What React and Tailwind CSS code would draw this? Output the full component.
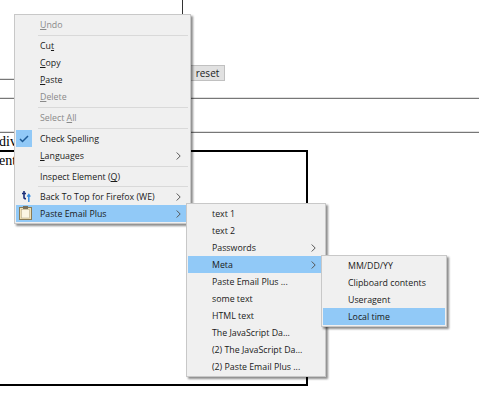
import React from "react";

const Chevron = () => (
  <svg width="5" height="8" viewBox="0 0 5 8" className="absolute right-[5px] top-[5px]" fill="none" stroke="#555" strokeWidth="1">
    <path d="M.7.5 4.2 4 .7 7.5" />
  </svg>
);

const Row = ({ children, dis, hi, arrow, pad = 24 }) => (
  <div className={`relative h-[17px] leading-[19px] whitespace-nowrap ${hi ? "bg-[#91c9f7]" : ""} ${dis ? "text-[#8a8a8a]" : "text-[#1a1a1a]"}`} style={{ paddingLeft: pad }}>
    {children}
    {arrow && <Chevron />}
  </div>
);

const Sep = ({ short }) => <div className={`-mr-[2px] flex items-center pl-[22px] ${short ? "h-[3px]" : "h-[4px]"}`}><div className="h-px w-full bg-[#d9d9d9]" /></div>;

const U = ({ children }) => <span className="underline underline-offset-1">{children}</span>;

const menu = "absolute bg-[#f0f0f0] border border-[#c8c8c8] pl-[1px] py-[1px] shadow-[2px_2px_2px_rgba(0,0,0,0.45)] text-[8.8px] [font-family:'Open_Sans','Noto_Sans',sans-serif]";

const Rule = ({ className }) => <div className={`h-[2px] border-t border-[#e0e0e0] bg-[#777] bg-clip-padding ${className}`} />;

export default function App() {
  return (
    <div className="relative h-[400px] w-[479px] overflow-hidden bg-white [font-family:'Liberation_Serif',serif] text-[14px] text-black">
      <div className="flex h-[78px] justify-end pr-[296px]">
        <div className="h-[14px] w-px bg-[#333]" />
      </div>
      <div className="h-[2px] w-[14px] border-t border-[#e0e0e0] bg-[#777] bg-clip-padding" />
      <button className="absolute left-[190px] top-[65px] h-[16px] w-[35px] border border-[#c0c0c0] bg-[#e1e1e1] text-[10px] leading-[14px] text-[#222] [font-family:'Open_Sans',sans-serif]">reset</button>
      <Rule className="mt-[17px]" />
      <Rule className="mt-[32px]" />
      <div className="-ml-[1px] mt-[1px] h-[16px] leading-[16px]">div</div>
      <div className="-ml-[6px] h-[236px] w-[314px] overflow-hidden border-[2.5px] border-black pl-[3px] pt-[2px] leading-[14px]">
        ent
      </div>

      <div className={`${menu} left-[14px] top-[14px] w-[177px] pr-[4px]`}>
        <Row dis><U>U</U>ndo</Row>
        <Sep />
        <Row>Cu<U>t</U></Row>
        <Row><U>C</U>opy</Row>
        <Row><U>P</U>aste</Row>
        <Row dis><U>D</U>elete</Row>
        <Sep />
        <Row dis>Select <U>A</U>ll</Row>
        <Sep />
        <div className="relative">
          <div className="absolute left-0 top-0 flex h-[17px] w-[16px] items-center justify-center bg-[#91c9f7]">
            <svg width="10" height="8" viewBox="0 0 10 8" fill="none" stroke="#1d5a96" strokeWidth="1.5"><path d="M1 4 3.5 6.5 9 1" /></svg>
          </div>
          <Row>Check Spelling</Row>
        </div>
        <Row arrow><U>L</U>anguages</Row>
        <Sep />
        <Row>Inspect Element (<U>Q</U>)</Row>
        <Sep short />
        <div className="relative">
          <svg className="absolute left-[6px] top-[3px]" width="9" height="11" viewBox="0 0 9 11" fill="none">
            <path d="M2 0v6.5c0 1 .6 1.2 2 1.2M0 2.5h4" stroke="#1c2f7a" strokeWidth="1.6" />
            <path d="M6.8 11V4M5.3 5.6 6.8 3.6l1.5 2" stroke="#3b8ee0" strokeWidth="1.5" />
          </svg>
          <Row arrow>Back To Top for Firefox (WE)</Row>
        </div>
        <div className="relative">
          <Row hi arrow>Paste Email Plus</Row>
          <svg className="absolute left-[3px] top-[1px]" width="13" height="14" viewBox="0 0 13 14">
            <rect x="0.5" y="1.5" width="12" height="12" fill="#efe0b6" stroke="#8a7b55" />
            <rect x="2.5" y="3.5" width="8" height="8.5" fill="#fbf6e4" stroke="#b9ad8c" strokeWidth="0.6" />
            <rect x="4" y="0" width="5" height="3" fill="#77705c" />
          </svg>
        </div>
      </div>

      <div className={`${menu} left-[186px] top-[203px] w-[140px] pr-[4px]`}>
        <Row>text 1</Row>
        <Row>text 2</Row>
        <Row arrow>Passwords</Row>
        <Row hi arrow>Meta</Row>
        <Row>Paste Email Plus ...</Row>
        <Row>some text</Row>
        <Row>HTML text</Row>
        <Row>The JavaScript Da...</Row>
        <Row>(2) The JavaScript Da...</Row>
        <Row>(2) Paste Email Plus ...</Row>
      </div>

      <div className={`${menu} left-[321px] top-[255px] w-[126px] pr-[1px]`}>
        <Row pad={25}>MM/DD/YY</Row>
        <Row pad={25}>Clipboard contents</Row>
        <Row pad={25}>Useragent</Row>
        <Row pad={25} hi>Local time</Row>
      </div>
    </div>
  );
}
